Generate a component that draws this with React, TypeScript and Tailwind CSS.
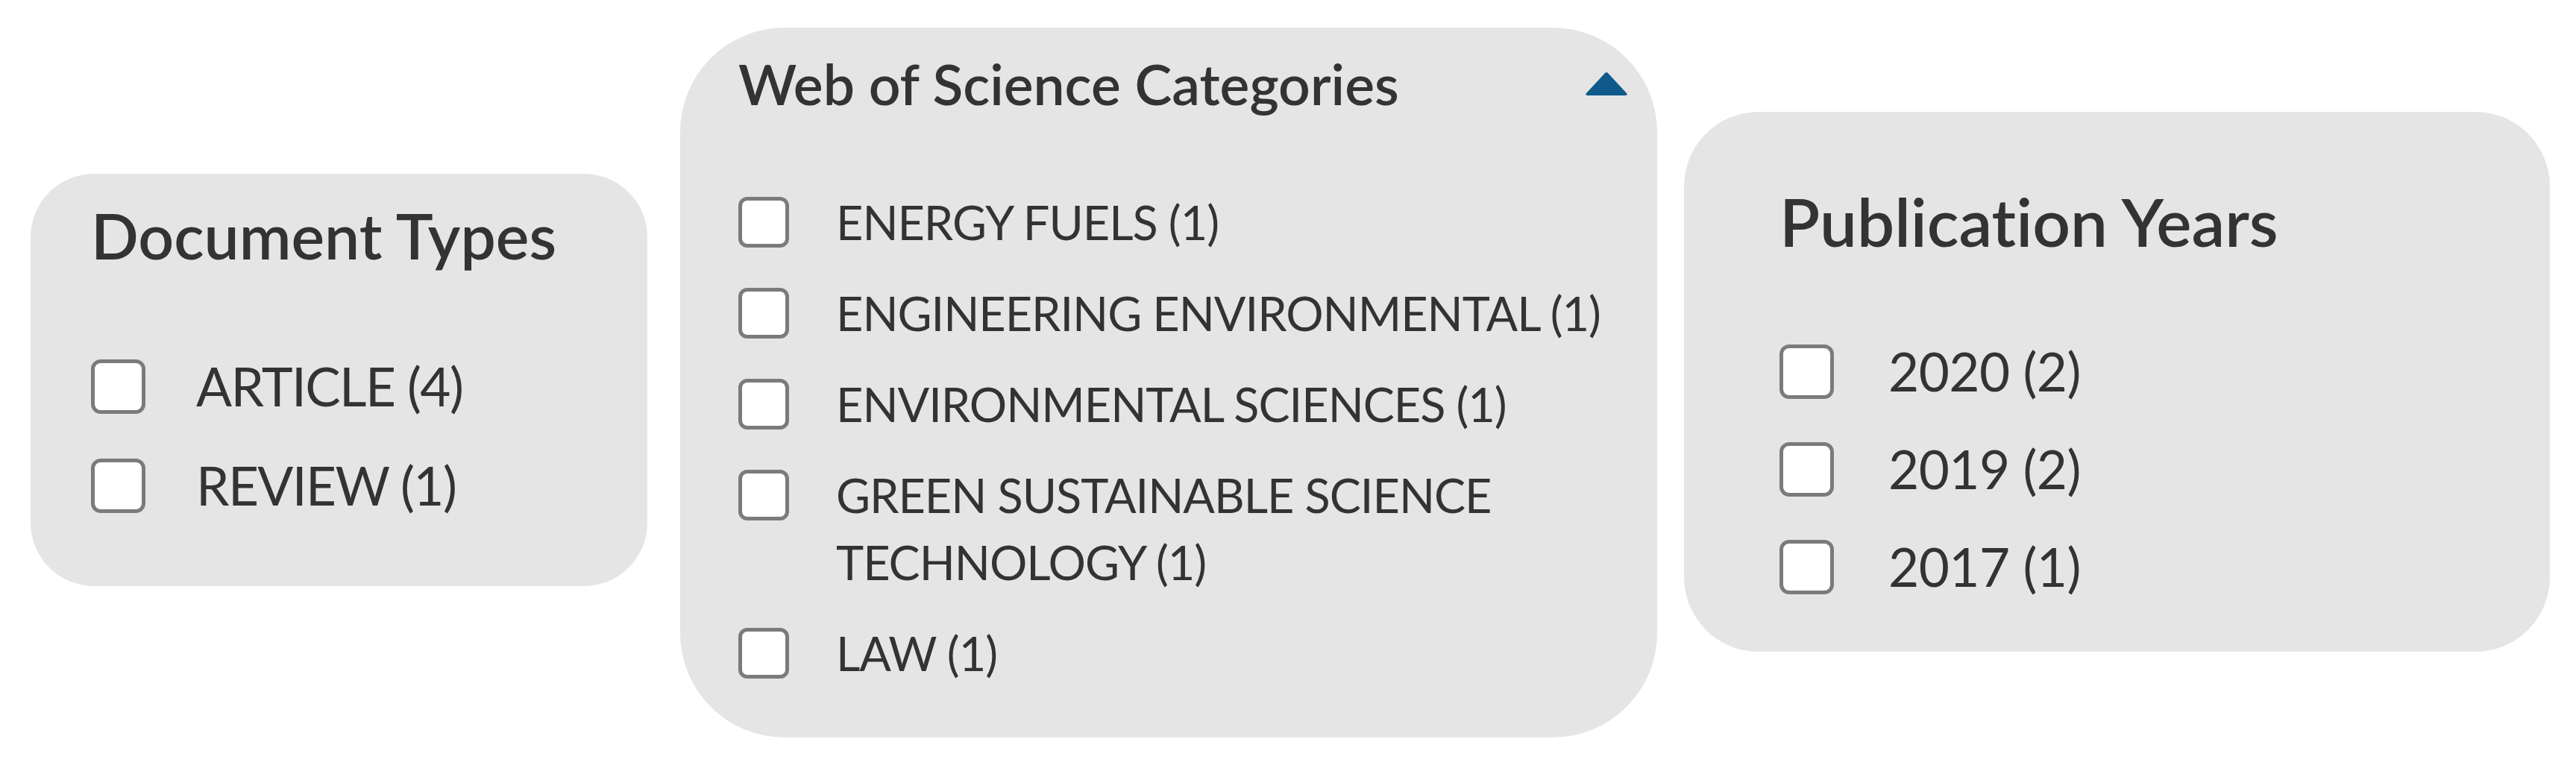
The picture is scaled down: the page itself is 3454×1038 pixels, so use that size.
import React from "react";

function BoxLg() {
  return <span className="block w-[73px] h-[73px] shrink-0 rounded-[13px] border-[5px] border-[#7b7b7b] bg-white" />;
}

function BoxSm() {
  return <span className="block w-[68px] h-[68px] shrink-0 rounded-[12px] border-[5px] border-[#7b7b7b] bg-white" />;
}

function RowLg({ label, gap }: { label: string; gap: "a" | "b" }) {
  return (
    <li className="flex items-center h-[90px]">
      <BoxLg />
      <span
        className={
          gap === "a"
            ? "ml-[68px] text-[71px] leading-[90px] tracking-[-1.6px] whitespace-nowrap"
            : "ml-[73px] text-[71px] leading-[90px] tracking-[-0.5px] whitespace-nowrap"
        }
      >
        {label}
      </span>
    </li>
  );
}

function RowSm({ children }: { children: React.ReactNode }) {
  return (
    <li className="flex items-start">
      <span className="flex items-center h-[90px]">
        <BoxSm />
      </span>
      <span className="ml-[63px] text-[63px] leading-[90px] tracking-[-1px] whitespace-nowrap">{children}</span>
    </li>
  );
}

export default function App() {
  return (
    <div className="w-[3454px] h-[1038px] bg-white flex items-start font-[Lato,sans-serif] text-[#333333] [font-variant-ligatures:none]">
      <section className="mt-[233px] ml-[41px] w-[827px] h-[553px] shrink-0 rounded-[85px] bg-[#e5e5e5] pl-[81px] pt-[38px]">
        <h2 className="text-[84px] leading-[90px] font-semibold whitespace-nowrap">Document Types</h2>
        <ul className="mt-[112px] flex flex-col gap-[43px]">
          <RowLg label="ARTICLE (4)" gap="a" />
          <RowLg label="REVIEW (1)" gap="a" />
        </ul>
      </section>

      <section className="mt-[37px] ml-[44px] w-[1310px] h-[952px] shrink-0 rounded-[140px] bg-[#e5e5e5] pl-[78px] pr-[39px] pt-[30px]">
        <div className="flex items-center justify-between h-[90px]">
          <h2 className="text-[75px] leading-[90px] font-semibold whitespace-nowrap">Web of Science Categories</h2>
          <svg width="58" height="33" viewBox="0 0 58 33" className="shrink-0">
            <path d="M29 1 Q30 1 31 2 L56 29 Q58 32 54 32 L4 32 Q0 32 2 29 L27 2 Q28 1 29 1 Z" fill="#0f5a8a" />
          </svg>
        </div>
        <ul className="mt-[96px] flex flex-col gap-[32px]">
          <RowSm>ENERGY FUELS (1)</RowSm>
          <RowSm>ENGINEERING ENVIRONMENTAL (1)</RowSm>
          <RowSm>ENVIRONMENTAL SCIENCES (1)</RowSm>
          <RowSm>
            GREEN SUSTAINABLE SCIENCE
            <br />
            TECHNOLOGY (1)
          </RowSm>
          <RowSm>LAW (1)</RowSm>
        </ul>
      </section>

      <section className="mt-[150px] ml-[36px] w-[1161px] h-[724px] shrink-0 rounded-[100px] bg-[#e5e5e5] pl-[128px] pt-[102px]">
        <h2 className="text-[89px] leading-[90px] font-semibold whitespace-nowrap">Publication Years</h2>
        <ul className="mt-[111px] flex flex-col gap-[41px]">
          <RowLg label="2020 (2)" gap="b" />
          <RowLg label="2019 (2)" gap="b" />
          <RowLg label="2017 (1)" gap="b" />
        </ul>
      </section>
    </div>
  );
}
